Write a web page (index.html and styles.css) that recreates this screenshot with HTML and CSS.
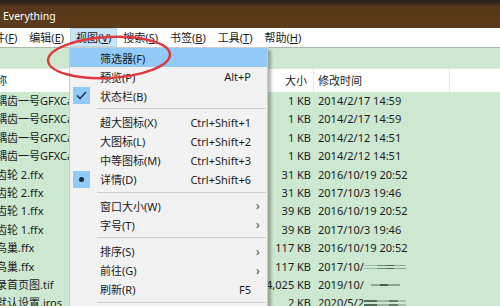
FILE: index.html
```html
<!DOCTYPE html>
<html lang="zh">
    <head>
        <meta charset="UTF-8" />
        <meta name="viewport" content="width=device-width, initial-scale=1.0" />
        <title>Everything</title>
        <link rel="stylesheet" href="styles.css">
    </head>
    <body>
        <div class="window">
            <div class="titlebar"><span class="title">Everything</span></div>

            <div class="menubar">
                <span class="menu-item first">文件(<u>F</u>)</span>
                <span class="menu-item">编辑(<u>E</u>)</span>
                <span class="menu-item active">视图(<u>V</u>)</span>
                <span class="menu-item">搜索(<u>S</u>)</span>
                <span class="menu-item">书签(<u>B</u>)</span>
                <span class="menu-item">工具(<u>T</u>)</span>
                <span class="menu-item">帮助(<u>H</u>)</span>
            </div>

            <div class="searchbar"></div>

            <div class="list">
                <div class="list-head">
                    <div class="col-name">名称</div>
                    <div class="col-size">大小</div>
                    <div class="col-date">修改时间</div>
                    <div class="col-rest"></div>
                </div>

                <div class="row"><div class="col-name">耦齿一号GFXCam.ffx</div><div class="col-size">1 KB</div><div class="col-date">2014/2/17 14:59</div><div class="col-rest"></div></div>
                <div class="row"><div class="col-name">耦齿一号GFXCam.ffx</div><div class="col-size">1 KB</div><div class="col-date">2014/2/17 14:59</div><div class="col-rest"></div></div>
                <div class="row"><div class="col-name">耦齿一号GFXCam.ffx</div><div class="col-size">1 KB</div><div class="col-date">2014/2/12 14:51</div><div class="col-rest"></div></div>
                <div class="row"><div class="col-name">耦齿一号GFXCam.ffx</div><div class="col-size">1 KB</div><div class="col-date">2014/2/12 14:51</div><div class="col-rest"></div></div>
                <div class="row"><div class="col-name">齿轮 2.ffx</div><div class="col-size">31 KB</div><div class="col-date">2016/10/19 20:52</div><div class="col-rest"></div></div>
                <div class="row"><div class="col-name">齿轮 2.ffx</div><div class="col-size">31 KB</div><div class="col-date">2017/10/3 19:46</div><div class="col-rest"></div></div>
                <div class="row"><div class="col-name">齿轮 1.ffx</div><div class="col-size">39 KB</div><div class="col-date">2016/10/19 20:52</div><div class="col-rest"></div></div>
                <div class="row"><div class="col-name">齿轮 1.ffx</div><div class="col-size">39 KB</div><div class="col-date">2017/10/3 19:46</div><div class="col-rest"></div></div>
                <div class="row"><div class="col-name">鸟巢.ffx</div><div class="col-size">117 KB</div><div class="col-date">2016/10/19 20:52</div><div class="col-rest"></div></div>
                <div class="row"><div class="col-name">鸟巢.ffx</div><div class="col-size">117 KB</div><div class="col-date">2017/10/<span class="redact r1"></span></div><div class="col-rest"></div></div>
                <div class="row"><div class="col-name">录首页图.tif</div><div class="col-size">4,025 KB</div><div class="col-date">2019/10/<span class="redact r2"></span></div><div class="col-rest"></div></div>
                <div class="row"><div class="col-name">默认设置.iros</div><div class="col-size">2 KB</div><div class="col-date">2020/5/2<span class="redact r3"></span></div><div class="col-rest"></div></div>
            </div>

            <!-- View menu, dropped down -->
            <div class="dropdown">
                <div class="dd-item hover"><span class="dd-icon"></span><span class="dd-label">筛选器(F)</span><span class="dd-key"></span><span class="dd-sub"></span></div>
                <div class="dd-item"><span class="dd-icon"></span><span class="dd-label">预览(P)</span><span class="dd-key">Alt+P</span><span class="dd-sub"></span></div>
                <div class="dd-item">
                    <span class="dd-icon on">
                        <svg width="11" height="9" viewBox="0 0 11 9"><polyline points="1,4.5 4,7.5 10,1" fill="none" stroke="#1c2a3a" stroke-width="1.3"/></svg>
                    </span>
                    <span class="dd-label">状态栏(B)</span><span class="dd-key"></span><span class="dd-sub"></span>
                </div>
                <div class="dd-sep"></div>
                <div class="dd-item"><span class="dd-icon"></span><span class="dd-label">超大图标(X)</span><span class="dd-key">Ctrl+Shift+1</span><span class="dd-sub"></span></div>
                <div class="dd-item"><span class="dd-icon"></span><span class="dd-label">大图标(L)</span><span class="dd-key">Ctrl+Shift+2</span><span class="dd-sub"></span></div>
                <div class="dd-item"><span class="dd-icon"></span><span class="dd-label">中等图标(M)</span><span class="dd-key">Ctrl+Shift+3</span><span class="dd-sub"></span></div>
                <div class="dd-item">
                    <span class="dd-icon on"><span class="dot"></span></span>
                    <span class="dd-label">详情(D)</span><span class="dd-key">Ctrl+Shift+6</span><span class="dd-sub"></span>
                </div>
                <div class="dd-sep"></div>
                <div class="dd-item"><span class="dd-icon"></span><span class="dd-label">窗口大小(W)</span><span class="dd-key"></span><span class="dd-sub">›</span></div>
                <div class="dd-item"><span class="dd-icon"></span><span class="dd-label">字号(T)</span><span class="dd-key"></span><span class="dd-sub">›</span></div>
                <div class="dd-sep"></div>
                <div class="dd-item"><span class="dd-icon"></span><span class="dd-label">排序(S)</span><span class="dd-key"></span><span class="dd-sub">›</span></div>
                <div class="dd-item"><span class="dd-icon"></span><span class="dd-label">前往(G)</span><span class="dd-key"></span><span class="dd-sub">›</span></div>
                <div class="dd-item"><span class="dd-icon"></span><span class="dd-label">刷新(R)</span><span class="dd-key">F5</span><span class="dd-sub"></span></div>
                <div class="dd-sep"></div>
            </div>

            <!-- hand-drawn red circle around the filter item -->
            <svg class="mark" width="500" height="306" viewBox="0 0 500 306">
                <ellipse cx="109" cy="57.5" rx="61" ry="20.5" transform="rotate(-3 109 57.5)" fill="none" stroke="#dd3a3c" stroke-width="2.4"/>
            </svg>
        </div>
    </body>
</html>
```

FILE: styles.css
```css
* {
    box-sizing: border-box;
}

html,
body {
    margin: 0;
}

body {
    width: 500px;
    height: 306px;
    overflow: hidden;
    font-family: "Noto Sans", "Noto Sans CJK SC", sans-serif;
    font-size: 11px;
    color: #1b1b1b;
}

.window {
    position: relative;
    width: 500px;
    height: 306px;
    overflow: hidden;
    background-color: #cde8d0;
}

/* Title bar */
.titlebar {
    height: 28px;
    padding: 3px 0 0 3px;
    display: flex;
    align-items: center;
    background: linear-gradient(#2a1d15 0, #35241a 3px, #573818 7px, #5c3b1b 100%);
}

.title {
    color: #fff;
    font-size: 10.5px;
}

/* Menu bar */
.menubar {
    height: 19px;
    display: flex;
    line-height: 19px;
    background-color: #fff;
    white-space: nowrap;
}

.menu-item {
    padding: 0 6px;
}

.menu-item.first {
    margin-left: -23px;
}

.menu-item.active {
    background-color: #cce4f7;
    box-shadow: inset 0 0 0 1px #b5d6f3;
}

.menu-item u {
    text-decoration-thickness: 1px;
    text-underline-offset: 1px;
}

/* Search box */
.searchbar {
    height: 22px;
    background-color: #cfe7d1;
    border-top: 1px solid #a7b9a9;
    border-bottom: 1px solid #e3e3e3;
}

/* Result list */
.list-head,
.row {
    display: grid;
    grid-template-columns: 240px 73px 136px 1fr;
    white-space: nowrap;
}

.list-head {
    height: 23px;
    line-height: 23px;
    background-color: #fff;
}

.row {
    height: 18.4px;
    line-height: 18.4px;
}

.col-name {
    overflow: hidden;
    text-indent: -4px;
}

.list-head .col-name {
    text-indent: -15px;
}

.col-size {
    text-align: right;
    padding-right: 2px;
}

.list-head .col-size {
    padding-right: 6px;
}

.col-date,
.col-rest {
    padding-left: 4px;
    border-left: 1px solid transparent;
}

.list-head .col-date,
.list-head .col-rest {
    border-left-color: #e5e5e5;
}

.redact {
    display: inline-block;
    width: 42px;
    height: 9px;
    vertical-align: -1px;
}

.redact.r1 {
    background:
        linear-gradient(#cde8d0 0 2px, transparent 2px 3px, #cde8d0 3px 5px, transparent 5px 6px, #cde8d0 6px),
        linear-gradient(90deg, #a9bfab 0 30%, #6f8c72 30% 55%, #44664a 55% 72%, #8ea990 72% 100%);
}

.redact.r2 {
    width: 36px;
    background:
        linear-gradient(#cde8d0 0 3px, transparent 3px 5px, #cde8d0 5px),
        linear-gradient(90deg, #cde8d0 0 20%, #8ea990 20% 45%, #3d6444 45% 68%, #88a68b 68% 100%);
}

.redact.r3 {
    background:
        linear-gradient(#cde8d0 0 1px, transparent 1px 3px, #cde8d0 3px 5px, transparent 5px 7px, #cde8d0 7px),
        linear-gradient(90deg, #4d6e52 0 30%, #9db59f 30% 60%, #5f8063 60% 80%, #a9bfab 80% 100%);
}

/* Drop-down menu */
.dropdown {
    position: absolute;
    left: 69px;
    top: 47px;
    width: 199px;
    height: 275px;
    background-color: #f2f2f2;
    border: 1px solid #cccccc;
    box-shadow: 3px 3px 3px rgba(0, 0, 0, 0.3);
}

.dd-item {
    display: grid;
    grid-template-columns: 30px 1fr auto 16px;
    align-items: center;
    height: 19px;
    white-space: nowrap;
}

.dd-item.hover {
    background-color: #91c9f7;
}

.dd-icon {
    width: 17px;
    height: 17px;
    margin-left: 3px;
    display: flex;
    align-items: center;
    justify-content: center;
}

.dd-icon.on {
    background-color: #91c9f7;
}

.dot {
    width: 5px;
    height: 5px;
    border-radius: 50%;
    background-color: #1c2a3a;
}

.dd-key {
    text-align: right;
}

.dd-sub {
    padding-left: 5px;
    font-size: 12px;
    color: #444;
}

.dd-sep {
    height: 7.5px;
    margin: 0 1px 0 27px;
    background: linear-gradient(#cfcfcf, #cfcfcf) no-repeat center / 100% 1px;
}

/* annotation */
.mark {
    position: absolute;
    left: 0;
    top: 0;
    pointer-events: none;
}
```
